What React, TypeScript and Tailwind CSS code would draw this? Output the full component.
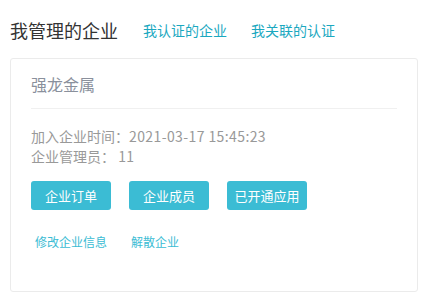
import React from "react";

export default function App() {
  const font = { fontFamily: '"Microsoft YaHei", "Noto Sans CJK SC", sans-serif' };
  return (
    <div className="w-[431px] h-[306px] bg-white" style={font}>
      <div className="flex items-center pt-[18px] pl-[10px] h-[42px]">
        <div className="text-[18px] leading-[24px] text-[#333333]">我管理的企业</div>
        <div className="ml-[25px] text-[14px] leading-[24px] text-[#1ba8bf]">我认证的企业</div>
        <div className="ml-[24px] text-[14px] leading-[24px] text-[#1ba8bf]">我关联的认证</div>
      </div>
      <div className="ml-[10px] mt-[16px] w-[408px] h-[234px] border border-[#ebebeb] rounded-[3px] px-5 pt-[13px]">
        <div className="text-[16px] leading-[24px] text-[#8a909c]">强龙金属</div>
        <div className="mt-[12px] h-px bg-[#f0f0f0]" />
        <div className="mt-[17px] text-[14px] leading-[20px] text-[#999999]">
          <div>
            加入企业时间：<span className="tracking-[0.4px]">2021-03-17 15:45:23</span>
          </div>
          <div>
            企业管理员： <span className="tracking-[0.4px]">11</span>
          </div>
        </div>
        <div className="mt-[15px] flex gap-[18px]">
          {["企业订单", "企业成员", "已开通应用"].map((t) => (
            <div
              key={t}
              className="w-[80px] h-[29px] rounded-[3px] bg-[#3bbcd4] text-white text-[13px] flex items-center justify-center"
            >
              {t}
            </div>
          ))}
        </div>
        <div className="mt-[22px] flex gap-[24px] pl-[4px] text-[12px] leading-[20px] text-[#3bbcd4]">
          <span>修改企业信息</span>
          <span>解散企业</span>
        </div>
      </div>
    </div>
  );
}
